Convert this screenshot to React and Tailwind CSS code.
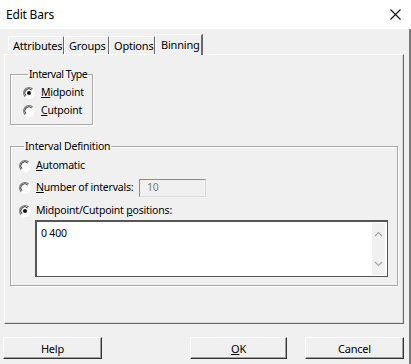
import React from "react";

const Radio = ({ checked }) => (
  <svg width="12" height="12" viewBox="0 0 12 12" className="shrink-0">
    <circle cx="6" cy="6" r="5" fill="#ffffff" />
    <path d="M2.2 9.8 A5.3 5.3 0 0 1 9.8 2.2" fill="none" stroke="#7a7a7a" strokeWidth="1.2" />
    <path d="M9.8 2.2 A5.3 5.3 0 0 1 2.2 9.8" fill="none" stroke="#ffffff" strokeWidth="1.2" />
    <path d="M3 8.8 A4 4 0 0 1 8.8 3" fill="none" stroke="#3a3a3a" strokeWidth="1" />
    {checked && <circle cx="6" cy="6" r="2" fill="#111111" />}
  </svg>
);

const Tab = ({ label, active, w }) =>
  active ? (
    <div className={"relative z-10 -mb-px h-[21px] border-l border-t border-white border-r-2 border-r-[#696969] bg-[#f0f0f0] pl-[5px] pt-[4px] text-[11px] text-black " + w}>
      {label}
    </div>
  ) : (
    <div className={"h-[18px] border-l border-t border-white border-r border-r-[#696969] bg-[#f0f0f0] pl-[4px] pt-[3px] text-[11px] text-black " + w}>
      {label}
    </div>
  );

const Button = ({ children, className }) => (
  <button
    className={
      "h-[22px] border border-t-white border-l-white border-r-[#333] border-b-[#333] bg-[#f0f0f0] text-[11px] text-black shadow-[inset_-1px_-1px_0_#a0a0a0] " +
      className
    }
  >
    {children}
  </button>
);

export default function App() {
  return (
    <div className="flex h-[364px] w-[411px] flex-col whitespace-nowrap bg-[#f0f0f0] font-['Noto_Sans',sans-serif] leading-none tracking-[-0.2px]">
      {/* Title bar */}
      <div className="flex h-[29px] items-center justify-between bg-white pl-[6px] pr-[10px]">
        <span className="text-[12px] text-black">Edit Bars</span>
        <svg width="11" height="11" viewBox="0 0 11 11">
          <path d="M0.5 0.5 L10.5 10.5 M10.5 0.5 L0.5 10.5" stroke="#111" strokeWidth="1.1" />
        </svg>
      </div>

      <div className="flex flex-1 flex-col border-r-2 border-[#7a7a7a] pl-[4px] pt-[5px]">
        {/* Tabs */}
        <div className="flex h-[20px] items-end pl-[4px]">
          <Tab label="Attributes" w="w-[56px]" />
          <Tab label="Groups" w="w-[45px]" />
          <Tab label="Options" w="w-[46px]" />
          <Tab label="Binning" w="w-[48px]" active />
        </div>

        {/* Panel */}
        <div className="h-[270px] w-[400px] border border-t-white border-l-white border-r-[#696969] border-b-[#696969] pl-[5px] pt-[14px] text-[10.5px] shadow-[inset_-1px_-1px_0_#d8d8d8]">
          <fieldset className="h-[56px] w-[83px] border border-[#a9a9a9] pl-[12px] shadow-[inset_1px_1px_0_white,1px_1px_0_white]">
            <legend className="ml-[5px] px-[1px] tracking-[-0.45px] text-black">Interval Type</legend>
            <div className="mt-[7px] flex items-center gap-[6px]">
              <Radio checked />
              <span>
                <u>M</u>idpoint
              </span>
            </div>
            <div className="mt-[6px] flex items-center gap-[6px]">
              <Radio />
              <span>
                <u>C</u>utpoint
              </span>
            </div>
          </fieldset>

          <fieldset className="mt-[16px] h-[145px] w-[388px] border border-[#a9a9a9] pl-[8px] shadow-[inset_1px_1px_0_white,1px_1px_0_white]">
            <legend className="ml-[5px] px-[1px] text-black">Interval Definition</legend>
            <div className="mt-[8px] flex items-center gap-[5px]">
              <Radio />
              <span>
                <u>A</u>utomatic
              </span>
            </div>
            <div className="mt-[7px] flex items-center">
              <Radio />
              <span className="ml-[5px] w-[103px]">
                <u>N</u>umber of intervals:
              </span>
              <div className="flex h-[18px] w-[67px] items-center border border-t-[#8a8a8a] border-l-[#8a8a8a] border-r-[#dcdcdc] border-b-[#dcdcdc] bg-[#f0f0f0] pl-[7px] text-[#7a7a7a]">
                10
              </div>
            </div>
            <div className="mt-[8px] flex items-center gap-[5px]">
              <Radio checked />
              <span>
                Midpoint/Cutpoint <u>p</u>ositions:
              </span>
            </div>
            <div className="ml-[16px] mt-[3px] flex h-[57px] w-[353px] border border-t-2 border-l-2 border-[#555] bg-white">
              <div className="flex-1 pl-[4px] pt-[6px] text-black">0 400</div>
              <div className="my-[1px] mr-[2px] flex w-[13px] flex-col items-center justify-between bg-[#f0f0f0] py-[8px]">
                <svg width="9" height="6" viewBox="0 0 9 6">
                  <path d="M1 5 L4.5 1.5 L8 5" fill="none" stroke="#a6a6a6" strokeWidth="1.2" />
                </svg>
                <svg width="9" height="6" viewBox="0 0 9 6">
                  <path d="M1 1 L4.5 4.5 L8 1" fill="none" stroke="#a6a6a6" strokeWidth="1.2" />
                </svg>
              </div>
            </div>
          </fieldset>
        </div>

        {/* Buttons */}
        <div className="mt-[13px] flex">
          <Button className="-ml-[1px] w-[99px]">Help</Button>
          <Button className="ml-[88px] w-[97px]">
            <u>O</u>K
          </Button>
          <Button className="ml-[18px] w-[99px]">Cancel</Button>
        </div>
      </div>
    </div>
  );
}
